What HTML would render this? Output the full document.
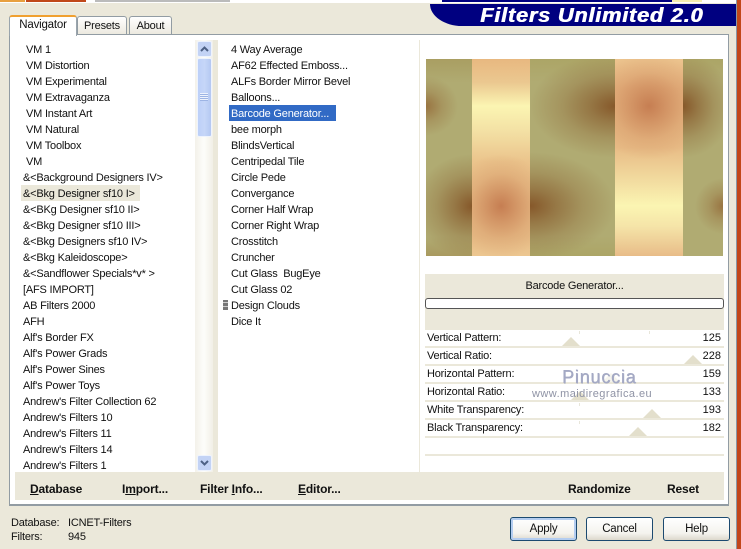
<!DOCTYPE html>
<html><head><meta charset="utf-8"><style>
html,body{margin:0;padding:0}
body{width:741px;height:549px;position:relative;overflow:hidden;background:#ebe8da;font-family:"Liberation Sans",sans-serif;font-size:11px;letter-spacing:-.2px;color:#111}
div{position:absolute;box-sizing:border-box}
.t{white-space:nowrap;line-height:18px;height:16px}
.s{white-space:nowrap;line-height:14px;height:14px}
.b{font-weight:bold;font-size:12px;white-space:nowrap;line-height:16px;color:#111;letter-spacing:-.15px}
.btn{height:24px;top:517px;border:1px solid #1c4a70;border-radius:3px;background:linear-gradient(#fff,#f4f3ee 70%,#dcd8cc);text-align:center;line-height:22px;font-size:11.5px}
.row{left:425px;width:299px;height:18px;background:#fff;border-bottom:2px solid #ebe8da}
.row span{position:absolute;white-space:nowrap;line-height:15px;top:1px}
.row .l{left:2px}.row .v{right:3px;letter-spacing:0}
.tri{width:0;height:0;border-left:9px solid transparent;border-right:9px solid transparent;border-bottom:9px solid #e3dfcc;bottom:0}
.tick{width:1px;height:3px;background:#e8e6da;top:1px}
.p{top:59px;height:197px}
</style></head><body>
<div style="left:0;top:0;width:741px;height:3px;background:#fff"></div>
<div style="left:0;top:0;width:25px;height:2px;background:#e8a040"></div>
<div style="left:26px;top:0;width:60px;height:2px;background:#c0481a"></div>
<div style="left:95px;top:0;width:135px;height:2px;background:#bbb"></div>
<div style="left:442px;top:0;width:230px;height:2px;background:#000080"></div>
<div style="left:672px;top:0;width:30px;height:2px;background:#f5eeb0"></div>
<div style="left:737px;top:0;width:4px;height:549px;background:#c2461a"></div>
<div style="left:736px;top:0;width:1px;height:549px;background:#8a97a5"></div>
<div style="left:430px;top:4px;width:306px;height:22px;background:#000080;border-bottom-left-radius:32px 22px"></div>
<div style="left:480px;top:5px;height:22px;line-height:22px;color:#fff;font-weight:bold;font-style:italic;font-size:20px;letter-spacing:.7px;white-space:nowrap;transform:scaleX(1.09);transform-origin:0 50%;text-shadow:.6px 0 0 #fff">Filters Unlimited 2.0</div>

<!-- panel -->
<div style="left:9px;top:34px;width:720px;height:472px;background:#fff;border:1px solid #929ca3;border-bottom:2px solid #929ca3"></div>
<!-- tabs -->
<div style="left:9px;top:15px;width:68px;height:21px;background:#fff;border:1px solid #9aa5ad;border-bottom:0;border-top:2px solid #f0a030;border-radius:3px 3px 0 0;text-align:center;line-height:17px;font-size:11.5px">Navigator</div>
<div style="left:77px;top:16px;width:50px;height:18px;background:linear-gradient(#fff,#ece9df);border:1px solid #929ca3;border-bottom:0;border-radius:3px 3px 0 0;text-align:center;line-height:18px">Presets</div>
<div style="left:129px;top:16px;width:43px;height:18px;background:linear-gradient(#fff,#ece9df);border:1px solid #929ca3;border-bottom:0;border-radius:3px 3px 0 0;text-align:center;line-height:18px">About</div>

<!-- left list -->
<div style="left:21px;top:185px;width:119px;height:16px;background:#ebe8da"></div>
<div class="t" style="left:26px;top:41px">VM 1</div>
<div class="t" style="left:26px;top:57px">VM Distortion</div>
<div class="t" style="left:26px;top:73px">VM Experimental</div>
<div class="t" style="left:26px;top:89px">VM Extravaganza</div>
<div class="t" style="left:26px;top:105px">VM Instant Art</div>
<div class="t" style="left:26px;top:121px">VM Natural</div>
<div class="t" style="left:26px;top:137px">VM Toolbox</div>
<div class="t" style="left:26px;top:153px">VM</div>
<div class="t" style="left:23px;top:169px">&amp;&lt;Background Designers IV&gt;</div>
<div class="t" style="left:23px;top:185px">&amp;&lt;Bkg Designer sf10 I&gt;</div>
<div class="t" style="left:23px;top:201px">&amp;&lt;BKg Designer sf10 II&gt;</div>
<div class="t" style="left:23px;top:217px">&amp;&lt;Bkg Designer sf10 III&gt;</div>
<div class="t" style="left:23px;top:233px">&amp;&lt;Bkg Designers sf10 IV&gt;</div>
<div class="t" style="left:23px;top:249px">&amp;&lt;Bkg Kaleidoscope&gt;</div>
<div class="t" style="left:23px;top:265px">&amp;&lt;Sandflower Specials*v* &gt;</div>
<div class="t" style="left:23px;top:281px">[AFS IMPORT]</div>
<div class="t" style="left:23px;top:297px">AB Filters 2000</div>
<div class="t" style="left:23px;top:313px">AFH</div>
<div class="t" style="left:23px;top:329px">Alf's Border FX</div>
<div class="t" style="left:23px;top:345px">Alf's Power Grads</div>
<div class="t" style="left:23px;top:361px">Alf's Power Sines</div>
<div class="t" style="left:23px;top:377px">Alf's Power Toys</div>
<div class="t" style="left:23px;top:393px">Andrew's Filter Collection 62</div>
<div class="t" style="left:23px;top:409px">Andrew's Filters 10</div>
<div class="t" style="left:23px;top:425px">Andrew's Filters 11</div>
<div class="t" style="left:23px;top:441px">Andrew's Filters 14</div>
<div class="t" style="left:23px;top:457px">Andrew's Filters 1</div>

<!-- scrollbar -->
<div style="left:195px;top:40px;width:18px;height:432px;background:linear-gradient(90deg,#f3f1ea,#fdfdfa 50%,#f1efe6)"></div>
<div style="left:197px;top:41px;width:15px;height:16px;background:#c3d3f5;border:1px solid #eef3fd;border-radius:2px"></div>
<svg style="position:absolute;left:197px;top:41px" width="15" height="16"><path d="M4 10L7.5 6.5L11 10" fill="none" stroke="#4d6185" stroke-width="2"/></svg>
<div style="left:197px;top:58px;width:15px;height:79px;background:linear-gradient(90deg,#bcd0f8,#c6d6f8 50%,#b4c8f2);border:1px solid #eef3fd;border-radius:2px"></div>
<div style="left:200px;top:93px;width:8px;height:8px;background:repeating-linear-gradient(#eef3fd 0 1px,#9db4e4 1px 2px)"></div>
<div style="left:197px;top:455px;width:15px;height:16px;background:#c3d3f5;border:1px solid #eef3fd;border-radius:2px"></div>
<svg style="position:absolute;left:197px;top:455px" width="15" height="16"><path d="M4 6L7.5 9.5L11 6" fill="none" stroke="#4d6185" stroke-width="2"/></svg>
<div style="left:213px;top:40px;width:5px;height:432px;background:#ebe8da"></div>

<!-- middle list -->
<div style="left:229px;top:105px;width:107px;height:16px;background:#316ac5"></div>
<div class="t" style="left:231px;top:41px">4 Way Average</div>
<div class="t" style="left:231px;top:57px">AF62 Effected Emboss...</div>
<div class="t" style="left:231px;top:73px">ALFs Border Mirror Bevel</div>
<div class="t" style="left:231px;top:89px">Balloons...</div>
<div class="t" style="left:231px;top:105px;color:#fff">Barcode Generator...</div>
<div class="t" style="left:231px;top:121px">bee morph</div>
<div class="t" style="left:231px;top:137px">BlindsVertical</div>
<div class="t" style="left:231px;top:153px">Centripedal Tile</div>
<div class="t" style="left:231px;top:169px">Circle Pede</div>
<div class="t" style="left:231px;top:185px">Convergance</div>
<div class="t" style="left:231px;top:201px">Corner Half Wrap</div>
<div class="t" style="left:231px;top:217px">Corner Right Wrap</div>
<div class="t" style="left:231px;top:233px">Crosstitch</div>
<div class="t" style="left:231px;top:249px">Cruncher</div>
<div class="t" style="left:231px;top:265px">Cut Glass&nbsp; BugEye</div>
<div class="t" style="left:231px;top:281px">Cut Glass 02</div>
<div class="t" style="left:231px;top:297px">Design Clouds</div>
<div class="t" style="left:231px;top:313px">Dice It</div>
<div style="left:223px;top:300px;width:5px;height:10px;background:repeating-linear-gradient(#777 0 2px,#ccc 2px 3px,#777 3px 4px)"></div>
<div style="left:419px;top:40px;width:1px;height:432px;background:#ebe8da"></div>

<!-- preview -->
<div class="p" style="left:426px;width:46px;background:radial-gradient(ellipse 58px 52px at 46px 147px,#86582a,rgba(134,88,42,.62) 30%,rgba(134,88,42,.28) 62%,rgba(134,88,42,0)),radial-gradient(ellipse 32px 30px at 0 47px,rgba(150,110,60,.9),rgba(150,110,60,.35) 50%,rgba(150,110,60,0)),linear-gradient(#a99e62,#b0ab72 12%,#b0ab72 90%,#a99a60)"></div>
<div class="p" style="left:472px;width:58px;background:radial-gradient(ellipse 50px 52px at 29px 147px,#c67e52,rgba(198,126,82,.6) 32%,rgba(198,126,82,.25) 62%,rgba(198,126,82,0)),linear-gradient(#e8b880,#ebc890 12%,#fbf5b2 47px,#f3e0a4 37%,#ebc48c 52%,#e8bc86 75%,#e8be88 90%,#ecc690)"></div>
<div class="p" style="left:530px;width:85px;background:radial-gradient(ellipse 85px 52px at 85px 47px,#86582a,rgba(134,88,42,.62) 30%,rgba(134,88,42,.28) 62%,rgba(134,88,42,0)),radial-gradient(ellipse 85px 54px at 0 147px,#86582a,rgba(134,88,42,.62) 30%,rgba(134,88,42,.28) 62%,rgba(134,88,42,0)),linear-gradient(#aca566,#b0ab72 12%,#b0ab72 90%,#aca566)"></div>
<div class="p" style="left:615px;width:68px;background:radial-gradient(ellipse 56px 54px at 34px 47px,#c67e52,rgba(198,126,82,.6) 32%,rgba(198,126,82,.25) 62%,rgba(198,126,82,0)),linear-gradient(#ecc48e,#e6b480 15%,#e8bc86 45%,#f2dca0 62%,#fbf5b2 147px,#f5e4a8 85%,#e8bc88)"></div>
<div class="p" style="left:683px;width:40px;background:radial-gradient(ellipse 50px 52px at 0 47px,#86582a,rgba(134,88,42,.62) 30%,rgba(134,88,42,.28) 62%,rgba(134,88,42,0)),radial-gradient(ellipse 28px 28px at 40px 147px,rgba(150,110,60,.9),rgba(150,110,60,.35) 50%,rgba(150,110,60,0)),linear-gradient(#aca566,#b0ab72 12%,#b0ab72 90%,#b0ab72)"></div>

<!-- right band -->
<div style="left:425px;top:274px;width:299px;height:56px;background:#ebe8da"></div>
<div class="t" style="left:425px;top:277px;width:299px;text-align:center">Barcode Generator...</div>
<div style="left:425px;top:298px;width:299px;height:11px;background:#fff;border:1px solid #555;border-radius:3px"></div>

<div class="row" style="top:330px"><span class="l">Vertical Pattern:</span><span class="v">125</span><div class="tri" style="left:137px"></div><div class="tick" style="left:154px"></div><div class="tick" style="left:224px"></div></div>
<div class="row" style="top:348px"><span class="l">Vertical Ratio:</span><span class="v">228</span><div class="tri" style="left:259px"></div></div>
<div class="row" style="top:366px"><span class="l">Horizontal Pattern:</span><span class="v">159</span><div class="tri" style="left:177px;opacity:.35"></div></div>
<div class="row" style="top:384px"><span class="l">Horizontal Ratio:</span><span class="v">133</span><div class="tri" style="left:146px"></div></div>
<div class="row" style="top:402px"><span class="l">White Transparency:</span><span class="v">193</span><div class="tri" style="left:218px"></div><div class="tick" style="left:154px"></div></div>
<div class="row" style="top:420px"><span class="l">Black Transparency:</span><span class="v">182</span><div class="tri" style="left:204px"></div><div class="tick" style="left:154px"></div></div>
<div class="row" style="top:438px"></div>
<div class="row" style="top:456px;height:16px;border:0"></div>

<!-- watermark -->
<div style="left:562px;top:366px;color:#a4a9c4;font-size:18px;line-height:22px;letter-spacing:.8px;white-space:nowrap;text-shadow:.5px .5px 0 #a4a9c4">Pinuccia</div>
<div style="left:532px;top:387px;color:#8f93a5;font-size:11px;line-height:14px;letter-spacing:.45px;white-space:nowrap">www.maidiregrafica.eu</div>

<!-- toolbar -->
<div style="left:15px;top:472px;width:709px;height:28px;background:#ebe8da"></div>
<div class="b" style="left:30px;top:481px"><u>D</u>atabase</div>
<div class="b" style="left:122px;top:481px">I<u>m</u>port...</div>
<div class="b" style="left:200px;top:481px">Filter <u>I</u>nfo...</div>
<div class="b" style="left:298px;top:481px"><u>E</u>ditor...</div>
<div class="b" style="left:568px;top:481px">Randomize</div>
<div class="b" style="left:667px;top:481px">Reset</div>

<!-- status -->
<div class="s" style="left:11px;top:516px">Database:</div>
<div class="s" style="left:68px;top:516px">ICNET-Filters</div>
<div class="s" style="left:11px;top:530px">Filters:</div>
<div class="s" style="left:68px;top:530px">945</div>

<!-- buttons -->
<div class="btn" style="left:510px;width:67px;box-shadow:inset 0 0 0 2px #b4cdf0">Apply</div>
<div class="btn" style="left:586px;width:67px">Cancel</div>
<div class="btn" style="left:663px;width:67px">Help</div>
</body></html>
